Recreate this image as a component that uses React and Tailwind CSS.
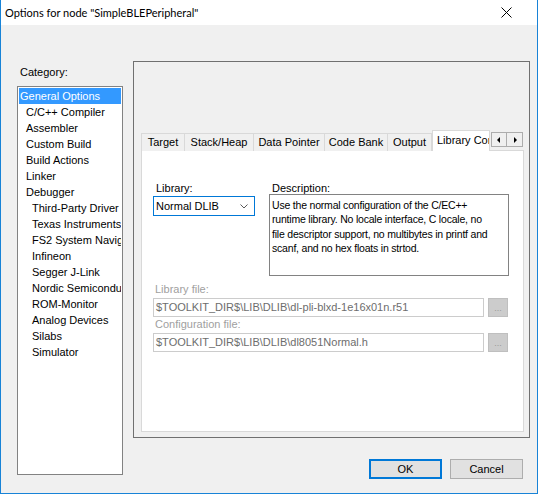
import React from "react";

const categories = [
  { label: "General Options", level: 0, selected: true },
  { label: "C/C++ Compiler", level: 1 },
  { label: "Assembler", level: 1 },
  { label: "Custom Build", level: 1 },
  { label: "Build Actions", level: 1 },
  { label: "Linker", level: 1 },
  { label: "Debugger", level: 1 },
  { label: "Third-Party Driver", level: 2 },
  { label: "Texas Instruments", level: 2 },
  { label: "FS2 System Navigator", level: 2 },
  { label: "Infineon", level: 2 },
  { label: "Segger J-Link", level: 2 },
  { label: "Nordic Semiconductor", level: 2 },
  { label: "ROM-Monitor", level: 2 },
  { label: "Analog Devices", level: 2 },
  { label: "Silabs", level: 2 },
  { label: "Simulator", level: 2 },
];

const tabs = [
  { label: "Target", w: "w-[44px]" },
  { label: "Stack/Heap", w: "w-[69px]" },
  { label: "Data Pointer", w: "w-[71px]" },
  { label: "Code Bank", w: "w-[63px]" },
  { label: "Output", w: "w-[44px]" },
];

const indent = ["pl-[1px]", "pl-[7px]", "pl-[13px]"];

function CategoryList() {
  return (
    <div className="w-[106px] h-[389px] border border-[#828282] bg-white p-px overflow-hidden">
      {categories.map((c) => (
        <div
          key={c.label}
          className={`h-[16px] leading-[16px] whitespace-nowrap overflow-hidden ${indent[c.level]} ${
            c.selected ? "bg-[#3399ff] text-white" : "text-black"
          }`}
        >
          {c.label}
        </div>
      ))}
    </div>
  );
}

function TabStrip() {
  return (
    <div className="flex items-end h-[21px] relative z-10 shrink-0">
      {tabs.map((t, i) => (
        <div
          key={t.label}
          className={`${t.w} h-[18px] leading-[17px] text-center border-t border-r border-[#d9d9d9] bg-[#f0f0f0] ${
            i === 0 ? "border-l" : ""
          } -mb-px`}
        >
          {t.label}
        </div>
      ))}
      <div className="w-[58px] h-[21px] leading-[19px] pl-[4px] bg-white border-t border-l border-r border-[#d9d9d9] -mb-px whitespace-nowrap overflow-hidden">
        Library Configuration
      </div>
      <div className="flex ml-px mb-[3px]">
        <div className="w-[16px] h-[15px] border border-[#adadad] bg-[#f0f0f0] flex items-center justify-center">
          <svg width="4" height="6" viewBox="0 0 4 6"><path d="M3 0 L0 3 L3 6 Z" fill="#000" /></svg>
        </div>
        <div className="w-[16px] h-[15px] border border-l-0 border-[#adadad] bg-[#f0f0f0] flex items-center justify-center">
          <svg width="4" height="6" viewBox="0 0 4 6"><path d="M1 0 L4 3 L1 6 Z" fill="#000" /></svg>
        </div>
      </div>
    </div>
  );
}

function PathField({ label, value }) {
  return (
    <>
      <div className="h-[12px] leading-[12px] pl-[2px] text-[#a0a0a0]">{label}</div>
      <div className="flex mt-[3px]">
        <div className="w-[331px] h-[19px] leading-[17px] border border-[#cccccc] bg-white px-[2px] text-[#6d6d6d] whitespace-nowrap overflow-hidden">
          {value}
        </div>
        <div className="ml-[4px] w-[20px] h-[19px] border border-[#bfbfbf] bg-[#cccccc] text-[#9a9a9a] text-[9px] leading-[18px] text-center">
          ...
        </div>
      </div>
    </>
  );
}

function LibraryPage() {
  return (
    <div className="flex-1 bg-white border border-[#d9d9d9] pl-[11px] pt-[31px]">
      <div className="flex">
        <div className="w-[102px]">
          <div className="h-[12px] leading-[12px] pl-[3px]">Library:</div>
          <div className="mt-[2px] h-[20px] border border-[#0078d7] bg-white flex items-center justify-between pl-[2px] pr-[6px]">
            <span>Normal DLIB</span>
            <svg width="8" height="5" viewBox="0 0 8 5">
              <path d="M0.5 0.5 L4 4 L7.5 0.5" fill="none" stroke="#5a5a5a" strokeWidth="1" />
            </svg>
          </div>
        </div>
        <div className="ml-[14px] w-[240px]">
          <div className="h-[12px] leading-[12px] pl-[3px]">Description:</div>
          <div className="h-[82px] border border-[#828282] bg-white px-[2px] pt-[3px] leading-[14.3px] text-[10.5px] tracking-[-0.2px] whitespace-nowrap overflow-hidden">
            <div>Use the normal configuration of the C/EC++</div>
            <div>runtime library. No locale interface, C locale, no</div>
            <div>file descriptor support, no multibytes in printf and</div>
            <div>scanf, and no hex floats in strtod.</div>
          </div>
        </div>
      </div>
      <div className="mt-[7px]">
        <PathField label="Library file:" value="$TOOLKIT_DIR$\LIB\DLIB\dl-pli-blxd-1e16x01n.r51" />
      </div>
      <div className="mt-[1px]">
        <PathField label="Configuration file:" value="$TOOLKIT_DIR$\LIB\DLIB\dl8051Normal.h" />
      </div>
    </div>
  );
}

export default function App() {
  return (
    <div
      className="w-[538px] h-[494px] flex flex-col border-x border-b border-[#1883d7] text-[11px] text-black"
      style={{ fontFamily: '"Liberation Sans", Arial, sans-serif' }}
    >
      {/* title bar */}
      <div className="h-[25px] shrink-0 bg-white flex items-center justify-between pl-[4px] pr-[25px]">
        <span className="text-[11px] leading-[14px] mt-[1px]" style={{ fontFamily: 'Lato, sans-serif' }}>
          Options for node "SimpleBLEPeripheral"
        </span>
        <svg width="11" height="11" viewBox="0 0 11 11">
          <path d="M0.5 0.5 L10.5 10.5 M10.5 0.5 L0.5 10.5" stroke="#000" strokeWidth="1" />
        </svg>
      </div>

      <div className="flex-1 bg-[#f0f0f0] flex pt-[36px] pl-[16px]">
        {/* category list */}
        <div className="flex flex-col">
          <div className="mt-[5px] h-[12px] leading-[12px] pl-[3px]">Category:</div>
          <div className="mt-[8px]">
            <CategoryList />
          </div>
        </div>

        {/* options panel + dialog buttons */}
        <div className="ml-[10px] flex-1 flex flex-col">
          <div className="w-[397px] h-[377px] border border-[#707070] flex flex-col pl-[7px] pr-[5px] pt-[67px] pb-[5px]">
            <TabStrip />
            <LibraryPage />
          </div>
          <div className="flex justify-end gap-[8px] pr-[14px] mt-[21px]">
            <button className="w-[73px] h-[20px] border-2 border-[#0078d7] bg-[#e1e1e1] leading-[16px]">OK</button>
            <button className="w-[73px] h-[20px] border border-[#adadad] bg-[#e1e1e1] leading-[18px]">Cancel</button>
          </div>
        </div>
      </div>
    </div>
  );
}
